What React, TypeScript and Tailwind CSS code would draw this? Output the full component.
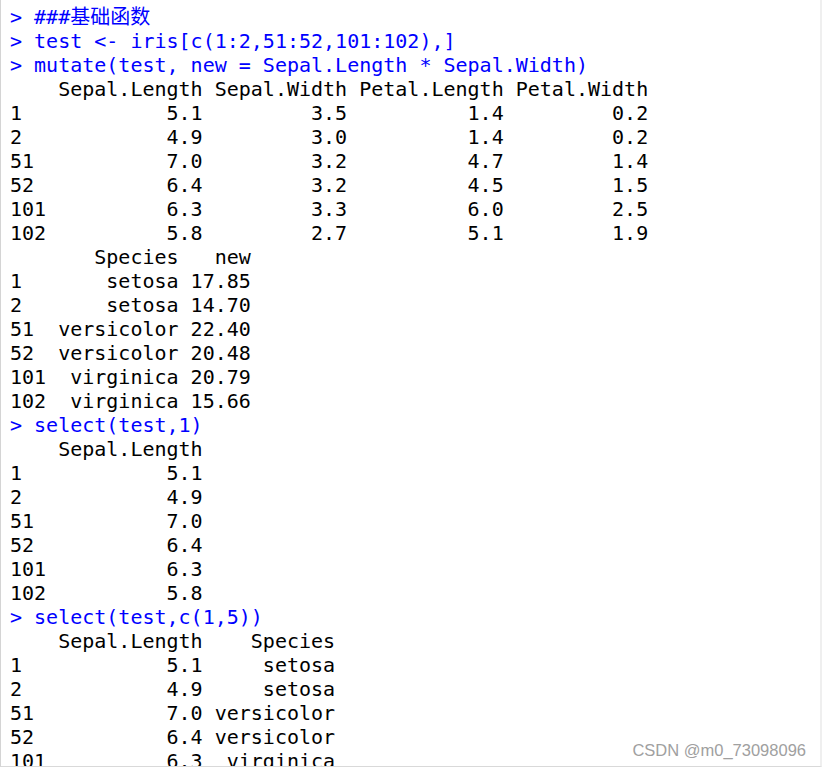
import React from "react";

type Line = { kind: "in" | "out"; text: string };

const lines: Line[] = [
  { kind: "in", text: "###基础函数" },
  { kind: "in", text: "test <- iris[c(1:2,51:52,101:102),]" },
  { kind: "in", text: "mutate(test, new = Sepal.Length * Sepal.Width)" },
  { kind: "out", text: "    Sepal.Length Sepal.Width Petal.Length Petal.Width" },
  { kind: "out", text: "1            5.1         3.5          1.4         0.2" },
  { kind: "out", text: "2            4.9         3.0          1.4         0.2" },
  { kind: "out", text: "51           7.0         3.2          4.7         1.4" },
  { kind: "out", text: "52           6.4         3.2          4.5         1.5" },
  { kind: "out", text: "101          6.3         3.3          6.0         2.5" },
  { kind: "out", text: "102          5.8         2.7          5.1         1.9" },
  { kind: "out", text: "       Species   new" },
  { kind: "out", text: "1       setosa 17.85" },
  { kind: "out", text: "2       setosa 14.70" },
  { kind: "out", text: "51  versicolor 22.40" },
  { kind: "out", text: "52  versicolor 20.48" },
  { kind: "out", text: "101  virginica 20.79" },
  { kind: "out", text: "102  virginica 15.66" },
  { kind: "in", text: "select(test,1)" },
  { kind: "out", text: "    Sepal.Length" },
  { kind: "out", text: "1            5.1" },
  { kind: "out", text: "2            4.9" },
  { kind: "out", text: "51           7.0" },
  { kind: "out", text: "52           6.4" },
  { kind: "out", text: "101          6.3" },
  { kind: "out", text: "102          5.8" },
  { kind: "in", text: "select(test,c(1,5))" },
  { kind: "out", text: "    Sepal.Length    Species" },
  { kind: "out", text: "1            5.1     setosa" },
  { kind: "out", text: "2            4.9     setosa" },
  { kind: "out", text: "51           7.0 versicolor" },
  { kind: "out", text: "52           6.4 versicolor" },
  { kind: "out", text: "101          6.3  virginica" },
];

export default function App() {
  return (
    <div className="relative w-[822px] h-[768px] overflow-hidden bg-white">
      <div className="h-[767px] w-[822px] overflow-hidden border-l border-l-[#d4d4d4] border-r-2 border-r-[#efefef] border-b border-b-[#d9d9d9]">
        <div
          className="pt-[5px] pl-[9px] text-[20px] leading-[24px] whitespace-pre"
          style={{ fontFamily: '"DejaVu Sans Mono", "Noto Sans CJK SC", monospace' }}
        >
          {lines.map((l, i) =>
            l.kind === "in" ? (
              <div key={i} className="text-[#0000ff]">
                {"> " + l.text}
              </div>
            ) : (
              <div key={i} className="text-black">
                {l.text}
              </div>
            )
          )}
        </div>
      </div>
      <div
        className="absolute right-[16px] bottom-[8px] text-[16.5px] leading-[20px] text-[#a0a0a0]"
        style={{ fontFamily: '"Liberation Sans", Arial, sans-serif' }}
      >
        CSDN @m0_73098096
      </div>
    </div>
  );
}
